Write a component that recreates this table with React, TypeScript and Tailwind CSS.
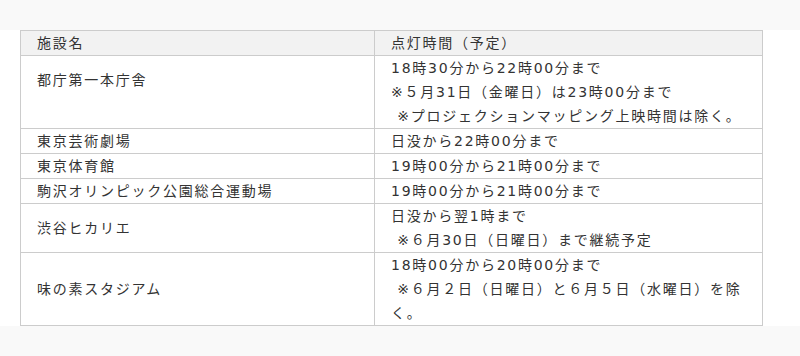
import React from "react";

const rows: { name: string; lines: string[]; padName?: boolean }[] = [
  {
    name: "都庁第一本庁舎",
    lines: [
      "18時30分から22時00分まで",
      "※５月31日（金曜日）は23時00分まで",
      " ※プロジェクションマッピング上映時間は除く。",
    ],
    padName: true,
  },
  { name: "東京芸術劇場", lines: ["日没から22時00分まで"] },
  { name: "東京体育館", lines: ["19時00分から21時00分まで"] },
  { name: "駒沢オリンピック公園総合運動場", lines: ["19時00分から21時00分まで"] },
  { name: "渋谷ヒカリエ", lines: ["日没から翌1時まで", " ※６月30日（日曜日）まで継続予定"] },
  {
    name: "味の素スタジアム",
    lines: ["18時00分から20時00分まで", " ※６月２日（日曜日）と６月５日（水曜日）を除", "く。"],
  },
];

export default function App() {
  return (
    <div
      className="min-h-[356px] w-full bg-[#f9f9f9] text-[#333] text-[14px] leading-[24px] tracking-[1.75px]"
      style={{ fontFamily: '"DejaVu Sans", "Noto Sans CJK JP", sans-serif' }}
    >
      <div className="h-[30px]" />
      <div className="bg-white px-[20px]">
        <table className="w-[742px] table-fixed border-collapse">
          <colgroup>
            <col className="w-[354px]" />
            <col className="w-[388px]" />
          </colgroup>
          <thead>
            <tr className="bg-[#f2f2f2]">
              <th className="border border-[#cccccc] px-[16px] py-0 text-left font-normal">施設名</th>
              <th className="border border-[#cccccc] px-[16px] py-0 text-left font-normal">点灯時間（予定）</th>
            </tr>
          </thead>
          <tbody>
            {rows.map((r) => (
              <tr key={r.name}>
                <td className="border border-[#cccccc] px-[16px] py-0 align-middle">
                  <div className={r.padName ? "pb-[24px]" : ""}>{r.name}</div>
                </td>
                <td className="border border-[#cccccc] pl-[16px] pr-0 py-0 align-middle whitespace-pre">
                  {r.lines.map((l, i) => (
                    <div key={i}>{l}</div>
                  ))}
                </td>
              </tr>
            ))}
          </tbody>
        </table>
      </div>
    </div>
  );
}
